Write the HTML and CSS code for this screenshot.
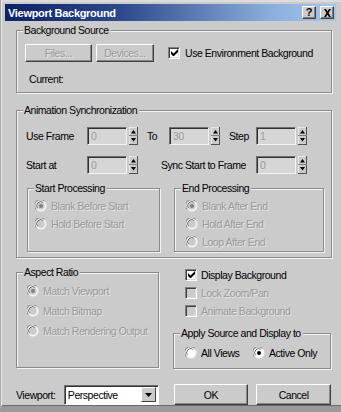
FILE: index.html
```html
<!DOCTYPE html>
<html>
<head>
<meta charset="utf-8">
<link rel="stylesheet" href="styles.css">
</head>
<body>
<div class="window">
  <div class="titlebar">
    <span class="title">Viewport Background</span>
    <div class="tbtns">
      <span class="tbtn">?</span>
      <span class="tbtn x"><svg width="9" height="8" viewBox="0 0 9 8"><path d="M1 0h2l1.5 2.5L6 0h2L5.5 4 8 8H6L4.5 5.5 3 8H1l2.5-4z" fill="#000"/></svg></span>
    </div>
  </div>

  <div class="content">
    <div class="group g-source">
      <div class="legend">Background Source</div>
      <div class="row src-row">
        <span class="btn dis w-files">Files...</span>
        <span class="btn dis w-dev">Devices...</span>
        <label class="check"><span class="cb on"></span>Use Environment Background</label>
      </div>
      <div class="current">Current:</div>
    </div>

    <div class="group g-anim">
      <div class="legend">Animation Synchronization</div>
      <div class="row spin-row r1">
        <span class="lbl w61">Use Frame</span>
        <span class="field">0</span><span class="spin"></span>
        <span class="lbl to">To</span>
        <span class="field">30</span><span class="spin"></span>
        <span class="lbl step">Step</span>
        <span class="field">1</span><span class="spin"></span>
      </div>
      <div class="row spin-row r2">
        <span class="lbl w61">Start at</span>
        <span class="field">0</span><span class="spin"></span>
        <span class="lbl sync">Sync Start to Frame</span>
        <span class="field">0</span><span class="spin"></span>
      </div>
      <div class="row proc-row">
        <div class="group sub g-start">
          <div class="legend">Start Processing</div>
          <div class="opt dis"><span class="rb on"></span>Blank Before Start</div>
          <div class="opt dis"><span class="rb"></span>Hold Before Start</div>
        </div>
        <div class="group sub g-end">
          <div class="legend">End Processing</div>
          <div class="opt dis"><span class="rb on"></span>Blank After End</div>
          <div class="opt dis"><span class="rb"></span>Hold After End</div>
          <div class="opt dis"><span class="rb"></span>Loop After End</div>
        </div>
      </div>
    </div>

    <div class="row lower">
      <div class="group g-aspect">
        <div class="legend">Aspect Ratio</div>
        <div class="opt2 dis"><span class="rb on"></span>Match Viewport</div>
        <div class="opt2 dis"><span class="rb"></span>Match Bitmap</div>
        <div class="opt2 dis"><span class="rb"></span>Match Rendering Output</div>
      </div>
      <div class="rcol">
        <div class="copt"><span class="cb on"></span>Display Background</div>
        <div class="copt dis"><span class="cb off"></span>Lock Zoom/Pan</div>
        <div class="copt dis"><span class="cb off"></span>Animate Background</div>
        <div class="group g-apply">
          <div class="legend">Apply Source and Display to</div>
          <div class="row apply-row">
            <span class="ropt"><span class="rb en"></span>All Views</span>
            <span class="ropt"><span class="rb en on"></span>Active Only</span>
          </div>
        </div>
      </div>
    </div>

    <div class="row bottom">
      <span class="vp-label">Viewport:</span>
      <div class="select"><span class="sel-text">Perspective</span><span class="sel-btn"></span></div>
      <span class="btn w-ok">OK</span>
      <span class="btn w-cancel">Cancel</span>
    </div>
  </div>
</div>
</body>
</html>
```

FILE: styles.css
```css
html, body {
  margin: 0;
  padding: 0;
  background: #8c8c8c;
}
.window {
  width: 341px;
  height: 412px;
  box-sizing: border-box;
  background: #cbcbcb;
  border-left: 1px solid #a8a8a8;
  border-bottom: 6px solid #9a9a9a;
  box-shadow: inset 1px 0 0 #e8e8e8, inset 0 2px 0 #dcdcdc, inset 0 -1px 0 #6a6a6a;
  font-family: "Liberation Sans", Arial, sans-serif;
  font-size: 10.5px;
  letter-spacing: -0.45px;
  color: #000;
  overflow: hidden;
}
.titlebar {
  margin: 4px 5px 0 4px;
  height: 17px;
  background: linear-gradient(to right, #0c2266 0%, #2c4a8c 35%, #8aaedc 80%, #a8c6ec 100%);
  display: flex;
  align-items: center;
  justify-content: space-between;
}
.title {
  color: #fff;
  font-weight: bold;
  font-size: 11px;
  padding-left: 3px;
  letter-spacing: -0.3px;
}
.tbtns {
  display: flex;
  gap: 4px;
  padding-right: 2px;
}
.tbtn {
  width: 14px;
  height: 13px;
  box-sizing: border-box;
  background: #cbcbcb;
  border-top: 1px solid #fff;
  border-left: 1px solid #fff;
  border-right: 1px solid #404040;
  border-bottom: 1px solid #404040;
  box-shadow: inset -1px -1px 0 #808080;
  font-weight: bold;
  font-size: 11px;
  line-height: 11px;
  letter-spacing: 0;
  text-align: center;
  display: flex;
  align-items: center;
  justify-content: center;
}
.content {
  padding: 0 10px 0 15px;
}
.row {
  display: flex;
  align-items: center;
}
.group {
  box-sizing: border-box;
  border: 1px solid #8a8a8a;
  box-shadow: inset 1px 1px 0 #f4f4f4, 1px 1px 0 #f4f4f4;
}
.legend {
  display: table;
  margin: -7px 0 0 6px;
  padding: 0 2px 0 1px;
  line-height: 13px;
  background: #cbcbcb;
}
.g-source {
  margin-top: 9px;
  height: 63px;
  width: 316px;
}
.src-row {
  margin-top: 7px;
  padding-left: 8px;
}
.btn {
  box-sizing: border-box;
  height: 18px;
  display: flex;
  align-items: center;
  justify-content: center;
  background: #cbcbcb;
  border-top: 1px solid #fff;
  border-left: 1px solid #fff;
  border-right: 1px solid #404040;
  border-bottom: 1px solid #404040;
  box-shadow: inset -1px -1px 0 #888;
}
.dis {
  color: #9a9a9a;
  text-shadow: 1px 1px 0 rgba(255,255,255,0.5);
}
.w-files { width: 67px; margin-right: 4px; }
.w-dev { width: 58px; margin-right: 14px; }
.check {
  display: flex;
  align-items: center;
}
.cb {
  width: 12px;
  height: 12px;
  box-sizing: border-box;
  margin-right: 5px;
  border-top: 1px solid #808080;
  border-left: 1px solid #808080;
  border-right: 1px solid #fff;
  border-bottom: 1px solid #fff;
  box-shadow: inset 1px 1px 0 #404040, inset -1px -1px 0 #d8d8d8;
  background: #fff;
  position: relative;
  flex: none;
}
.cb.off {
  background: #cbcbcb;
}
.cb.on::after {
  content: "";
  position: absolute;
  left: 2px;
  top: 1px;
  width: 7px;
  height: 7px;
  background: url("data:image/svg+xml;utf8,<svg xmlns='http://www.w3.org/2000/svg' width='7' height='7'><path d='M0 2v3l2 2h1l4-4V0L2.5 4.5z' fill='black'/></svg>") no-repeat;
}
.current {
  margin: 11px 0 0 12px;
  line-height: 13px;
}
.g-anim {
  margin-top: 17px;
  height: 148px;
  width: 316px;
}
.spin-row { height: 18px; padding-left: 9px; }
.r1 { margin-top: 10px; }
.r2 { margin-top: 11px; }
.lbl { flex: none; }
.w61 { width: 61px; }
.to { width: 22px; margin-left: 9px; }
.step { width: 27px; margin-left: 9px; }
.sync { width: 95px; margin-left: 23px; }
.field {
  box-sizing: border-box;
  width: 40px;
  height: 18px;
  padding: 1px 0 0 3px;
  color: #9c9c9c;
  background: #d6d6d6;
  border-top: 1px solid #707070;
  border-left: 1px solid #707070;
  border-right: 1px solid #f4f4f4;
  border-bottom: 1px solid #f4f4f4;
  box-shadow: inset 1px 1px 0 #303030;
  line-height: 14px;
  flex: none;
}
.spin {
  width: 9px;
  height: 18px;
  margin-left: 2px;
  flex: none;
  background: url("data:image/svg+xml;utf8,<svg xmlns='http://www.w3.org/2000/svg' width='9' height='18'><rect x='0' y='0' width='9' height='18' fill='%23cbcbcb'/><path d='M0 0h9M0 0v18' stroke='white'/><path d='M8.5 0v18M0 17.5h9' stroke='%23505050'/><path d='M0 8.5h9' stroke='%23808080'/><path d='M4.5 3L7 6.5H2z' fill='black'/><path d='M4.5 14.5L7 11H2z' fill='black'/></svg>") no-repeat;
}
.proc-row {
  margin-top: 14px;
  padding-left: 10px;
  align-items: flex-start;
}
.sub { height: 64px; }
.g-start { width: 133px; margin-right: 14px; }
.g-end { width: 150px; }
.opt {
  height: 18px;
  display: flex;
  align-items: center;
}
.g-start .opt { padding-left: 7px; }
.g-end .opt { padding-left: 11px; }
.g-start .opt:nth-child(2), .g-end .opt:nth-child(2) { margin-top: 2px; }
.rb {
  width: 12px;
  height: 12px;
  margin-right: 4px;
  flex: none;
  background: url("data:image/svg+xml;utf8,<svg xmlns='http://www.w3.org/2000/svg' width='12' height='12'><circle cx='6' cy='6' r='5.5' fill='%23f4f4f4'/><path d='M1.2 9.4A5.5 5.5 0 0 1 9.4 1.2' fill='none' stroke='%23808080'/><path d='M2.6 8.2A4 4 0 0 1 8.2 2.6' fill='none' stroke='%23404040'/><circle cx='6' cy='6' r='3.7' fill='%23cbcbcb'/></svg>") no-repeat;
}
.rb.on {
  background: url("data:image/svg+xml;utf8,<svg xmlns='http://www.w3.org/2000/svg' width='12' height='12'><circle cx='6' cy='6' r='5.5' fill='%23f4f4f4'/><path d='M1.2 9.4A5.5 5.5 0 0 1 9.4 1.2' fill='none' stroke='%23808080'/><path d='M2.6 8.2A4 4 0 0 1 8.2 2.6' fill='none' stroke='%23404040'/><circle cx='6' cy='6' r='3.7' fill='%23cbcbcb'/><circle cx='6' cy='6' r='2' fill='%23808080'/></svg>") no-repeat;
}
.rb.en {
  background: url("data:image/svg+xml;utf8,<svg xmlns='http://www.w3.org/2000/svg' width='12' height='12'><circle cx='6' cy='6' r='5.5' fill='%23f4f4f4'/><path d='M1.2 9.4A5.5 5.5 0 0 1 9.4 1.2' fill='none' stroke='%23808080'/><path d='M2.6 8.2A4 4 0 0 1 8.2 2.6' fill='none' stroke='%23404040'/><circle cx='6' cy='6' r='3.7' fill='white'/></svg>") no-repeat;
}
.rb.en.on {
  background: url("data:image/svg+xml;utf8,<svg xmlns='http://www.w3.org/2000/svg' width='12' height='12'><circle cx='6' cy='6' r='5.5' fill='%23f4f4f4'/><path d='M1.2 9.4A5.5 5.5 0 0 1 9.4 1.2' fill='none' stroke='%23808080'/><path d='M2.6 8.2A4 4 0 0 1 8.2 2.6' fill='none' stroke='%23404040'/><circle cx='6' cy='6' r='3.7' fill='white'/><circle cx='6' cy='6' r='2' fill='black'/></svg>") no-repeat;
}
.lower {
  margin-top: 7px;
  align-items: flex-start;
}
.g-aspect {
  margin-top: 7px;
  width: 144px;
  height: 96px;
  margin-right: 14px;
}
.opt2 {
  height: 20px;
  display: flex;
  align-items: center;
  padding-left: 10px;
}
.opt2:nth-child(2) { margin-top: 2px; }
.rcol {
  width: 158px;
  padding-top: 1px;
}
.copt {
  height: 18px;
  display: flex;
  align-items: center;
  padding-left: 12px;
}
.copt .cb { margin-right: 4px; }
.g-apply {
  margin-top: 13px;
  height: 36px;
  width: 158px;
}
.apply-row {
  margin-top: 4px;
  height: 18px;
  padding-left: 11px;
}
.ropt {
  display: flex;
  align-items: center;
}
.ropt:first-child { width: 68px; }
.bottom {
  margin-top: 15px;
  height: 21px;
}
.vp-label { width: 48px; }
.select {
  box-sizing: border-box;
  width: 95px;
  height: 20px;
  margin-right: 15px;
  display: flex;
  align-items: center;
  background: #fff;
  border-top: 1px solid #707070;
  border-left: 1px solid #707070;
  border-right: 1px solid #fff;
  border-bottom: 1px solid #fff;
  box-shadow: inset 1px 1px 0 #303030;
  padding: 2px 2px 2px 3px;
}
.sel-text { flex: 1; }
.sel-btn {
  width: 15px;
  height: 15px;
  box-sizing: border-box;
  background: #cbcbcb url("data:image/svg+xml;utf8,<svg xmlns='http://www.w3.org/2000/svg' width='7' height='4'><path d='M0 0h7L3.5 4z' fill='black'/></svg>") no-repeat center;
  border-top: 1px solid #fff;
  border-left: 1px solid #fff;
  border-right: 1px solid #404040;
  border-bottom: 1px solid #404040;
}
.w-ok { width: 75px; height: 21px; margin-right: 8px; }
.w-cancel { width: 75px; height: 21px; }
```
